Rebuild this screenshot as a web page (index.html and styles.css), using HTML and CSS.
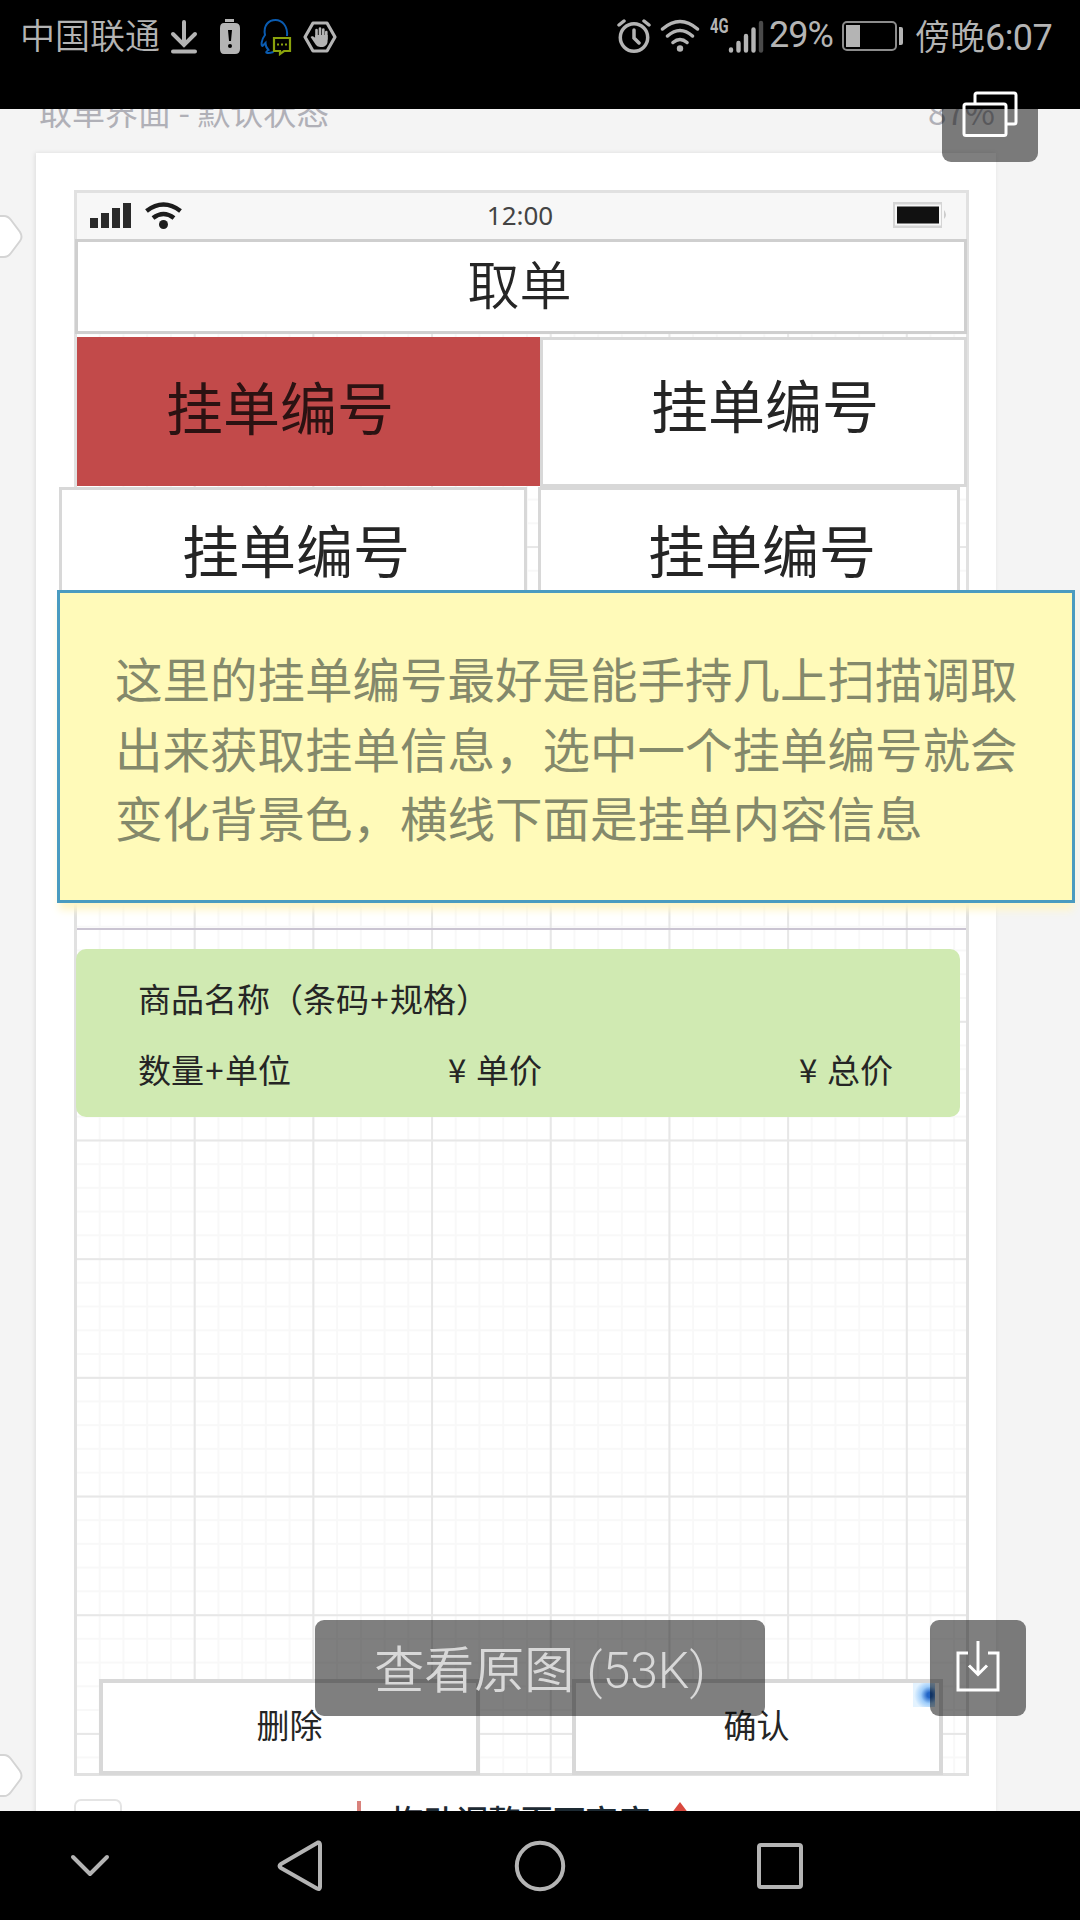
FILE: index.html

```html
<!DOCTYPE html>
<html lang="zh-CN">
<head>
<meta charset="utf-8">
<title>查看图片</title>
<link rel="stylesheet" href="styles.css">
</head>
<body>
<div class="screen">
  <header class="status">
    <div class="status-left">
      <span class="carrier">中国联通</span>
      <svg class="ic-down" width="28" height="36" viewBox="0 0 28 36" fill="none" stroke="#b4b4b4" stroke-width="4" stroke-linecap="round"><path d="M14 4v23M3 16l11 11 11-11M3 33.500h22"/></svg>
      <svg class="ic-batt" width="22" height="36" viewBox="0 0 22 36"><path fill="#b4b4b4" d="M6 0h9v3H6zM5 4h11q5 0 5 5v21q0 5-5 5H5q-4 0-4-5V9q0-5 4-5z"/><path d="M9 11h4l-1 11h-2z"/><circle cx="11" cy="27" r="2"/></svg>
      <svg class="ic-qq" width="32" height="38" viewBox="0 0 32 38" fill="none"><path stroke="#0a5bb0" stroke-width="2" d="M27 18C28 8 22 2 15.500 2S3 7 5 17C1 22 1 28 2.500 28l3-3c0 4 1 5 3 7-5 3-1 4 5 2"/><path stroke="#8aa20c" stroke-width="2.200" d="M14 20h16v13h-6l-4 3v-3h-6z"/><path stroke="#8aa20c" stroke-width="2" d="M17 26.500h2m2 0h2m2 0h2"/></svg>
      <svg class="ic-hand" width="34" height="32" viewBox="0 0 34 32"><path fill="none" stroke="#b4b4b4" stroke-width="3.200" stroke-linejoin="round" d="M10 2h14l8 14-8 14H10L2 16z"/><path fill="none" stroke="#b4b4b4" stroke-width="2.600" stroke-linecap="round" d="M13.500 18V9M17 18V7.500M20.300 18V8.500M23.300 18v-7"/><path fill="#b4b4b4" d="M12.300 14h12.300v6c0 4-3 6-6 6-4 0-5-1-7-4l-4-6c1-1.500 3-1 4.700 1z"/></svg>
    </div>
    <div class="status-right">
      <svg class="ic-alarm" width="34" height="36" viewBox="0 0 34 36" fill="none" stroke="#b4b4b4" stroke-width="3.500" stroke-linecap="round"><circle cx="17" cy="19.500" r="13.700"/><path d="M17 12v8l5 5M2 7l5-4M32 7l-5-4"/></svg>
      <svg class="ic-wifi" width="40" height="34" viewBox="0 0 40 34" fill="none" stroke="#b4b4b4" stroke-width="3.500" stroke-linecap="round"><path d="M2.500 10Q20-5 37.500 10M7.500 17Q20 6 32.500 17M13 23.500q7-6 14 0"/><circle cx="20" cy="29.500" r="3.200" fill="#b4b4b4" stroke="none"/></svg>
      <span class="net">4G</span>
      <svg class="ic-signal" width="36" height="36" viewBox="0 0 36 36" stroke="#b4b4b4" stroke-width="4.400" stroke-linecap="round"><path d="M3 31.500v1M10.500 25v7.500M18 18v14.500M25.500 11.500v21"/><path stroke="#4a4a4a" d="M33 5v27.500"/></svg>
      <span class="percent">29%</span>
      <svg class="ic-power" width="62" height="30" viewBox="0 0 62 30"><rect x="1" y="1" width="53" height="28" rx="4" fill="none" stroke="#8c8c8c" stroke-width="2"/><path fill="#b4b4b4" d="M4 4h14v22H4zM57 6h2q2 0 2 2v14q0 2-2 2h-2z"/></svg>
      <span class="clock">傍晚<b>6:07</b></span>
    </div>
  </header>

  <main class="viewer">
    <div class="board-head"><span>取单界面 - 默认状态</span><span class="zoom-level">87%</span></div>
    <section class="board">
      <div class="phone">
        <div class="ios-bar">
          <svg width="92" height="28" viewBox="0 0 92 28"><path fill="#2a2a2a" d="M0 17h8v10H0zM11 12h8v15h-8zM22 7h8v20h-8zM33 2h8v25h-8z"/><path fill="none" stroke="#1c1c1c" stroke-width="4.500" d="M56.500 10q17-13 34 0M63 17q10.500-8 21 0"/><circle cx="73.500" cy="23.500" r="4.500" fill="#1c1c1c"/></svg>
          <span>12:00</span>
          <svg class="ios-batt" width="57" height="28" viewBox="0 0 57 28"><path fill="#d5d5d5" d="M1 1h49v26H1z"/><path fill="#f7f7f7" d="M3 3.500h46v21H3z"/><path fill="#111" d="M5 5.500h42v17H5z"/><path fill="#ccc" d="M52 9q4 5 0 9z"/></svg>
        </div>
        <div class="title-box">取单</div>
        <div class="orders orders-top">
          <div class="order order-selected">挂单编号</div>
          <div class="order order-tr">挂单编号</div>
        </div>
        <div class="orders orders-next">
          <div class="order order-bl">挂单编号</div>
          <div class="order order-br">挂单编号</div>
        </div>
        <div class="divider"></div>
        <div class="goods">
          <div class="goods-name">商品名称（条码<i>+</i>规格）</div>
          <div class="goods-row">
            <span>数量<i>+</i>单位</span>
            <span class="unit"><b>¥</b>单价</span>
            <span class="total"><b>¥</b>总价</span>
          </div>
        </div>
        <div class="actions">
          <div class="action">删除</div>
          <div class="action action-ok">确认<span class="mark"></span></div>
        </div>
      </div>
      <div class="board-foot">
        <span class="foot-box"></span>
        <span class="foot-bar"></span>
        <span class="foot-text">拖动调整页面高度</span>
        <svg width="20" height="24" viewBox="0 0 20 24"><path fill="#d9493f" d="M10 0l9 12-9 12L1 12z"/></svg>
      </div>
    </section>

    <svg class="handle handle-top" width="24" height="46" viewBox="0 0 24 46"><path d="M-4 2h8q4 0 7 4l9 12q3 5 0 9l-9 12q-3 4-7 4h-8z" fill="#fff" stroke="#d4d4d4" stroke-width="2"/></svg>
    <svg class="handle handle-bottom" width="24" height="46" viewBox="0 0 24 46"><path d="M-4 2h8q4 0 7 4l9 12q3 5 0 9l-9 12q-3 4-7 4h-8z" fill="#fff" stroke="#d4d4d4" stroke-width="2"/></svg>
    <div class="note">这里的挂单编号最好是能手持几上扫描调取<br>出来获取挂单信息，选中一个挂单编号就会<br>变化背景色，横线下面是挂单内容信息</div>
    <div class="tool tool-gallery"></div>
    <div class="tool tool-original">查看原图 (53K)</div>
    <div class="tool tool-save">
      <svg width="44" height="52" viewBox="0 0 44 52" fill="none" stroke="#fff" stroke-width="3"><path d="M12 13H2v37h40V13H32M22 1v33M13 25.500l9 9 9-9"/></svg>
    </div>
  </main>
  <svg class="gallery-icon" width="56" height="48" viewBox="0 0 56 48" fill="none" stroke="#fff" stroke-width="3"><rect x="2" y="13" width="42" height="31.500" rx="2"/><path d="M13 12V4q0-2 2-2h37q2 0 2 2v27q0 2-2 2h-8"/></svg>

  <nav class="nav">
    <svg class="nav-hide" width="40" height="24" viewBox="0 0 40 24"><path d="M3 3l17 17L37 3"/></svg>
    <svg class="nav-back" width="46" height="54" viewBox="0 0 46 54"><path d="M41 3.500Q43 3 43 6v42q0 3-3 1.500L4 29q-3-2 0-4z"/></svg>
    <svg class="nav-home" width="54" height="54" viewBox="0 0 54 54"><circle cx="27" cy="27" r="23.200"/></svg>
    <svg class="nav-recent" width="48" height="48" viewBox="0 0 48 48"><rect x="3" y="3" width="42" height="42" rx="2"/></svg>
  </nav>
</div>
</body>
</html>
```

FILE: styles.css

```css
* { box-sizing: border-box; }
body { margin: 0; background: #000; font-family: Roboto, "Noto Sans CJK SC", sans-serif; }
svg { display: block; flex: none; }
i, b { font-style: normal; font-weight: inherit; }
.screen { position: relative; width: 1080px; height: 1920px; display: flex; flex-direction: column; overflow: hidden; }

/* system status bar */
.status { height: 109px; padding: 0 26px 0 20px; display: flex; justify-content: space-between; background: #000; color: #b4b4b4; white-space: nowrap; }
.status-left, .status-right { display: flex; align-items: flex-start; padding-top: 18px; }
.carrier, .clock { font-weight: 350; font-size: 35px; line-height: 40px; }
.ic-down { margin-left: 10px; }
.ic-batt { margin: 1px 0 0 21px; }
.ic-qq { margin-left: 19px; }
.ic-hand { margin: 3px 0 0 11px; }
.ic-alarm { margin-right: 9px; }
.ic-wifi { margin: 1px 10px 0 0; }
.net { font: bold 20px/17px Roboto, sans-serif; display: inline-block; width: 18px; transform: scaleX(.74); transform-origin: left; }
.ic-signal { margin-right: 5px; }
.percent { font-size: 36px; line-height: 35px; width: 73px; letter-spacing: -1px; }
.ic-power { margin: 3px 11px 0 0; }
.clock { width: 139px; }
.clock b { font-weight: 400; font-size: 36px; letter-spacing: -.6px; }

/* picture being viewed */
.viewer { position: relative; height: 1702px; overflow: hidden; background: #f4f4f4; font-family: "Noto Sans CJK SC", sans-serif; color: #252525; }
.board-head { height: 44px; margin: -20px 85px 20px 39px; display: flex; justify-content: space-between; font-size: 33px; line-height: 44px; color: #b0b0b7; }
.board { width: 960px; height: 1670px; margin-left: 36px; padding: 37px 0 0 38px; background: #fff; box-shadow: -1px 0 4px #ddd; }
.phone {
  width: 895px; height: 1586px; border: 3px solid #e1e1e1; display: flex; flex-direction: column;
  background:
    linear-gradient(90deg, #e7e7e7 2px, transparent 2px) -2px -3px / 118.700px 118.700px,
    linear-gradient(#e7e7e7 2px, transparent 2px) -2px -3px / 118.700px 118.700px,
    linear-gradient(90deg, #f8f8f8 2px, transparent 2px) -2px -3px / 23.740px 23.740px,
    linear-gradient(#f8f8f8 2px, transparent 2px) -2px -3px / 23.740px 23.740px, #fff;
}
.ios-bar { height: 46px; padding: 0 17px 2px 13px; display: flex; justify-content: space-between; align-items: center; background: #f7f7f7; font: 26px "Noto Sans", sans-serif; color: #444; }
.ios-bar span { margin-right: 34px; }
.title-box { height: 95px; margin: 0 -1px 0 -2px; border: 3px solid #cfcfcf; background: #fff; display: flex; justify-content: center; font-size: 52px; line-height: 82px; padding-right: 3px; font-weight: 350; }
.orders { display: flex; font-size: 57px; }
.orders-top { height: 150px; margin: 3px -1px 0 0; }
.orders-next { position: relative; height: 120px; margin: 0 6px 0 -18px; justify-content: space-between; }
.order { border: 3px solid #d8d8d8; background: #fff; }
.order-selected { width: 463px; height: 149px; padding-left: 89px; line-height: 136px; background: #c24a4a; border: 0; color: #2b1212; }
.order-tr { flex: 1; padding-left: 108px; line-height: 127px; }
.order-bl { width: 468px; padding-left: 120px; line-height: 117px; }
.order-br { width: 422px; padding-left: 107px; line-height: 117px; }
.divider { height: 2px; margin-top: 321px; background: #cac4d2; }
.goods { height: 168px; width: 884px; margin: 19px 0 0 -1px; padding: 26px 0 0 62px; border-radius: 10px; background: #d0eab2; font-size: 33px; line-height: 46px; white-space: nowrap; }
.goods i { display: inline-block; width: 21px; text-align: center; }
.goods-row { display: flex; margin-top: 25px; }
.goods-row b { display: inline-block; width: 28px; font-weight: 400; }
.unit { margin-left: 157px; }
.total { margin-left: 257px; }
.actions { margin: auto 23px -2px 22px; display: flex; justify-content: space-between; font-size: 33px; }
.action { position: relative; width: 381px; height: 96px; border: 4px solid #d8d8d8; background: #fff; text-align: center; line-height: 83px; }
.action-ok { width: 371px; padding-right: 2px; }
.mark { position: absolute; right: 4px; top: 0; width: 22px; height: 24px; background: radial-gradient(circle at 75% 50%, #2266c8 12%, #9dccfa 42%, #e4f3ff 75%); }
.board-foot { display: flex; align-items: flex-start; padding-top: 23px; }
.foot-box { width: 48px; height: 40px; border: 2px solid #e4e4e4; border-radius: 7px; }
.foot-bar { width: 4px; height: 30px; margin: 2px 0 0 235px; background: #d9827c; }
.foot-text { font-size: 32.400px; font-weight: 500; line-height: 32px; margin: 5px 20px 0 30px; white-space: nowrap; color: #1d2a33; }
.board-foot svg { margin-top: 3px; }

/* items lying over the canvas */
.handle { position: absolute; left: 0; }
.handle-top { top: 105px; }
.handle-bottom { top: 1644px; }
.note { position: absolute; left: 57px; top: 481px; width: 1018px; height: 313px; border: 3px solid #4a9bc0; padding: 50px 0 0 55px; background: #fffab9; box-shadow: 0 9px 8px -2px #fff6c8; font-size: 47.500px; line-height: 69.500px; color: #84896b; white-space: nowrap; }
.tool { position: absolute; border-radius: 9px; background: rgba(0, 0, 0, .5); display: flex; align-items: center; justify-content: center; }
.tool-gallery { left: 942px; top: -43px; width: 96px; height: 96px; }
.tool-original { left: 315px; top: 1511px; width: 450px; height: 96px; padding-top: 6px; font: 350 50px/90px Roboto, "Noto Sans CJK SC", sans-serif; color: #d8d8d8; white-space: nowrap; }
.tool-save { left: 930px; top: 1511px; width: 96px; height: 96px; padding: 0 0 4px 0; }
.gallery-icon { position: absolute; left: 962px; top: 91px; }

/* system navigation bar */
.nav { height: 109px; padding: 0 276px 0 70px; display: flex; align-items: center; background: #000; fill: none; stroke: #b4b4b4; stroke-width: 4; stroke-linecap: round; stroke-linejoin: round; }
.nav-back { margin-left: 167px; }
.nav-home { margin-left: 190px; }
.nav-recent { margin-left: 189px; }
```
